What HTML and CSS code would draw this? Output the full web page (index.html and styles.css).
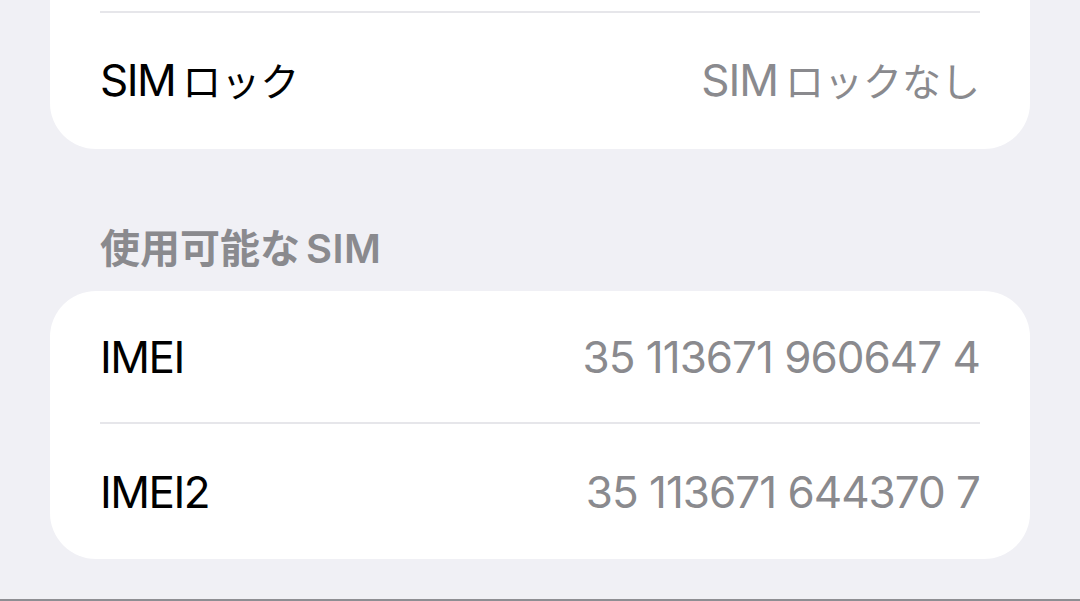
FILE: index.html
```html
<!DOCTYPE html>
<html lang="ja">
<head>
    <meta charset="UTF-8">
    <meta name="viewport" content="width=device-width, initial-scale=1.0">
    <title>SIM情報</title>
    <link rel="stylesheet" href="styles.css">
</head>
<body>
    <div class="screen">
        <div class="group group-top">
            <div class="row row-hidden"></div>
            <div class="sep"></div>
            <div class="row row-last">
                <span class="label">SIM<span class="ja">ロック</span></span>
                <span class="value">SIM<span class="ja">ロックなし</span></span>
            </div>
        </div>

        <h2 class="section-title">使用可能な<span class="lat">SIM</span></h2>

        <div class="group">
            <div class="row row-first">
                <span class="label">IMEI</span>
                <span class="value">35 113671 960647 4</span>
            </div>
            <div class="sep"></div>
            <div class="row row-last">
                <span class="label">IMEI2</span>
                <span class="value">35 113671 644370 7</span>
            </div>
        </div>
    </div>
    <div class="bottom-rule"></div>
</body>
</html>
```

FILE: styles.css
```css
body { margin: 0; background: #f0f0f5; font-family: Inter, "Noto Sans CJK JP", sans-serif; overflow: hidden; }
.screen { height: 599px; padding: 0 50px; box-sizing: border-box; display: flow-root; overflow: hidden; }
.group { background: #fff; border-radius: 46px; overflow: hidden; }
.group-top { margin-top: -122px; }
.row { display: flex; align-items: center; justify-content: space-between; padding: 0 50px; font-size: 44px; line-height: 54px; letter-spacing: -1px; }
.row-hidden { height: 133px; }
.row-first { height: 131px; }
.row-last { height: 135px; }
.group-top .row-last { height: 136px; }
.sep { height: 2px; background: #e6e6ea; margin: 0 50px; }
.label { color: #000; letter-spacing: -1.5px; }
.value { color: #8a8a8e; }
.ja { font-size: 39px; letter-spacing: 0; margin-left: 7px; }
.section-title { margin: 76px 0 18px 50px; font-size: 40px; line-height: 48px; font-weight: 600; color: #8a8a8e; }
.section-title .lat { margin-left: 6px; letter-spacing: 0.5px; }
.bottom-rule { height: 2px; background: #8e8e93; }
```
